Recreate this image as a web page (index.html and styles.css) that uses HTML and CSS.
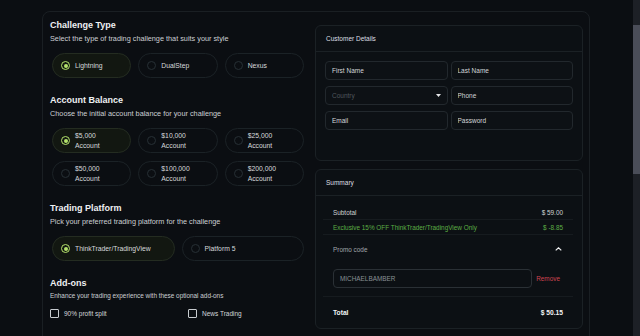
FILE: index.html
```html
<!DOCTYPE html>
<html lang="en">
<head>
    <meta charset="UTF-8">
    <title>Checkout</title>
    <link rel="stylesheet" href="styles.css">
</head>
<body>
    <div class="page">
        <div class="checkout">
            <div class="col-main">
                <section class="block">
                    <h2>Challenge Type</h2>
                    <p class="hint">Select the type of trading challenge that suits your style</p>
                    <div class="options three">
                        <label class="option selected"><span class="radio"></span><span>Lightning</span></label>
                        <label class="option"><span class="radio"></span><span>DualStep</span></label>
                        <label class="option"><span class="radio"></span><span>Nexus</span></label>
                    </div>
                </section>

                <section class="block">
                    <h2>Account Balance</h2>
                    <p class="hint">Choose the initial account balance for your challenge</p>
                    <div class="options three">
                        <label class="option selected"><span class="radio"></span><span>$5,000<br>Account</span></label>
                        <label class="option"><span class="radio"></span><span>$10,000<br>Account</span></label>
                        <label class="option"><span class="radio"></span><span>$25,000<br>Account</span></label>
                        <label class="option"><span class="radio"></span><span>$50,000<br>Account</span></label>
                        <label class="option"><span class="radio"></span><span>$100,000<br>Account</span></label>
                        <label class="option"><span class="radio"></span><span>$200,000<br>Account</span></label>
                    </div>
                </section>

                <section class="block">
                    <h2>Trading Platform</h2>
                    <p class="hint">Pick your preferred trading platform for the challenge</p>
                    <div class="options two">
                        <label class="option selected"><span class="radio"></span><span>ThinkTrader/TradingView</span></label>
                        <label class="option"><span class="radio"></span><span>Platform 5</span></label>
                    </div>
                </section>

                <section class="block">
                    <h2>Add-ons</h2>
                    <p class="hint small">Enhance your trading experience with these optional add-ons</p>
                    <div class="addons">
                        <label class="check-item"><span class="check"></span><span>90% profit split</span></label>
                        <label class="check-item"><span class="check"></span><span>News Trading</span></label>
                    </div>
                </section>
            </div>

            <div class="col-side">
                <div class="card">
                    <div class="card-head">Customer Details</div>
                    <div class="fields">
                        <input class="field" type="text" placeholder="First Name">
                        <input class="field" type="text" placeholder="Last Name">
                        <div class="field select">
                            <span>Country</span>
                            <svg width="5" height="3" viewBox="0 0 5 3"><path d="M0 0h5L2.5 3z" fill="#e6e8ea"/></svg>
                        </div>
                        <input class="field" type="text" placeholder="Phone">
                        <input class="field" type="email" placeholder="Email">
                        <input class="field" type="password" placeholder="Password">
                    </div>
                </div>

                <div class="card summary">
                    <div class="card-head">Summary</div>
                    <div class="sum-body">
                        <div class="sum-row">
                            <span>Subtotal</span>
                            <span class="amount">$ 59.00</span>
                        </div>
                        <div class="sum-row green">
                            <span>Exclusive 15% OFF ThinkTrader/TradingView Only</span>
                            <span>$ -8.85</span>
                        </div>
                        <div class="promo">
                            <div class="promo-toggle">
                                <span>Promo code</span>
                                <svg width="7" height="4" viewBox="0 0 7 4"><path d="M0.7 3.4L3.5 0.8L6.3 3.4" fill="none" stroke="#f2f3f4" stroke-width="1.2"/></svg>
                            </div>
                            <div class="promo-entry">
                                <div class="promo-input">MICHAELBAMBER</div>
                                <span class="remove">Remove</span>
                            </div>
                        </div>
                        <div class="sum-row total">
                            <span>Total</span>
                            <span>$ 50.15</span>
                        </div>
                    </div>
                </div>
            </div>
        </div>
    </div>

    <div class="scrollbar"><div class="scrollbar-thumb"></div></div>
</body>
</html>
```

FILE: styles.css
```css
* {
    box-sizing: border-box;
}
html {
    background: #0b0e12;
}
body {
    margin: 0;
    font-family: 'Liberation Sans', Arial, sans-serif;
    color: #d0d4d7;
    background: #0b0e12;
}
.scrollbar {
    position: fixed;
    top: 0;
    right: 0;
    width: 7px;
    height: 100vh;
    background: #1d2026;
}
.scrollbar-thumb {
    margin-top: 25px;
    height: 149px;
    background: #4a4d58;
}
.page {
    padding: 11px 0 0 42px;
}
.checkout {
    width: 548px;
    min-height: 620px;
    border: 1px solid #1a1f23;
    border-radius: 8px;
    display: grid;
    grid-template-columns: 254px 268px;
    column-gap: 11px;
    align-items: start;
    padding: 8px 6px 20px 7px;
}
.block + .block {
    margin-top: 17px;
}
.block h2 {
    margin: 0;
    font-size: 9px;
    line-height: 11px;
    font-weight: bold;
    color: #eef0f2;
}
.hint {
    margin: 3px 0 0;
    font-size: 7.3px;
    line-height: 9px;
    color: #cbcfd3;
}
.hint.small {
    font-size: 6.4px;
    line-height: 8px;
}
.options {
    display: grid;
    column-gap: 7px;
    row-gap: 8px;
    margin: 10px 0 0 2px;
}
.options.three {
    grid-template-columns: repeat(3, 1fr);
}
.options.two {
    grid-template-columns: 1fr 1fr;
}
.option {
    height: 25px;
    display: flex;
    align-items: center;
    gap: 5px;
    padding-left: 8px;
    border: 1px solid #1b2226;
    border-radius: 13px;
    font-size: 6.8px;
    line-height: 9.3px;
    color: #d6d9dc;
}
.option.selected {
    background: #121711;
    border-color: #242c21;
}
.radio {
    flex: none;
    width: 9px;
    height: 9px;
    border-radius: 50%;
    border: 1px solid #273035;
}
.selected .radio {
    display: grid;
    place-items: center;
    border: 1.5px solid #b4e26c;
}
.selected .radio::after {
    content: "";
    width: 4px;
    height: 4px;
    border-radius: 50%;
    background: #b4e26c;
}
.addons {
    display: grid;
    grid-template-columns: 138px 1fr;
    margin-top: 9px;
}
.check-item {
    display: flex;
    align-items: center;
    gap: 5px;
    font-size: 6.5px;
    color: #d3d7da;
}
.check {
    width: 9px;
    height: 9px;
    border: 1px solid #c8ccd0;
    border-radius: 1px;
}
.col-side {
    margin-top: 5px;
}
.card {
    border: 1px solid #1b2125;
    border-radius: 6px;
    background: #0c1014;
}
.card.summary {
    margin-top: 8px;
}
.card-head {
    height: 25.5px;
    display: flex;
    align-items: center;
    padding: 0 10px;
    border-bottom: 1px solid #1b2125;
    font-size: 6.5px;
    color: #dcdfe2;
}
.fields {
    display: grid;
    grid-template-columns: 1fr 1fr;
    column-gap: 3px;
    row-gap: 6px;
    padding: 9.5px 9px 30px;
}
.field {
    height: 19px;
    display: flex;
    align-items: center;
    justify-content: space-between;
    padding: 0 6px;
    border: 1px solid #22282d;
    border-radius: 4px;
    background: #0d1115;
    font-family: inherit;
    font-size: 6.5px;
    color: #d3d6d9;
    outline: none;
}
.field::placeholder {
    color: #d3d6d9;
}
.field.select {
    color: #4f565c;
}
.sum-body {
    padding: 9.5px 9px 0 7px;
}
.sum-row {
    height: 15px;
    display: flex;
    align-items: center;
    justify-content: space-between;
    padding: 0 10px;
    border-bottom: 1px solid #161b1f;
    font-size: 6.4px;
    color: #cfd2d5;
}
.sum-row.green {
    color: #5cae44;
}
.promo {
    padding: 0 10px 8px;
    border-bottom: 1px solid #161b1f;
}
.promo-toggle {
    height: 28px;
    display: flex;
    align-items: center;
    justify-content: space-between;
    padding-right: 1px;
    font-size: 6.4px;
    color: #a0a6ab;
}
.promo-entry {
    display: flex;
    align-items: center;
    gap: 4px;
    margin-top: 6px;
}
.promo-input {
    flex: 1;
    height: 19px;
    display: flex;
    align-items: center;
    padding: 0 6px;
    border: 1px solid #2a3035;
    border-radius: 4px;
    font-size: 6.4px;
    color: #8a9095;
}
.remove {
    margin-right: 3px;
    font-size: 6.4px;
    color: #cc4551;
}
.sum-row.total {
    height: 31px;
    border-bottom: none;
    font-size: 6.7px;
    font-weight: bold;
    color: #f2f4f5;
}
```
